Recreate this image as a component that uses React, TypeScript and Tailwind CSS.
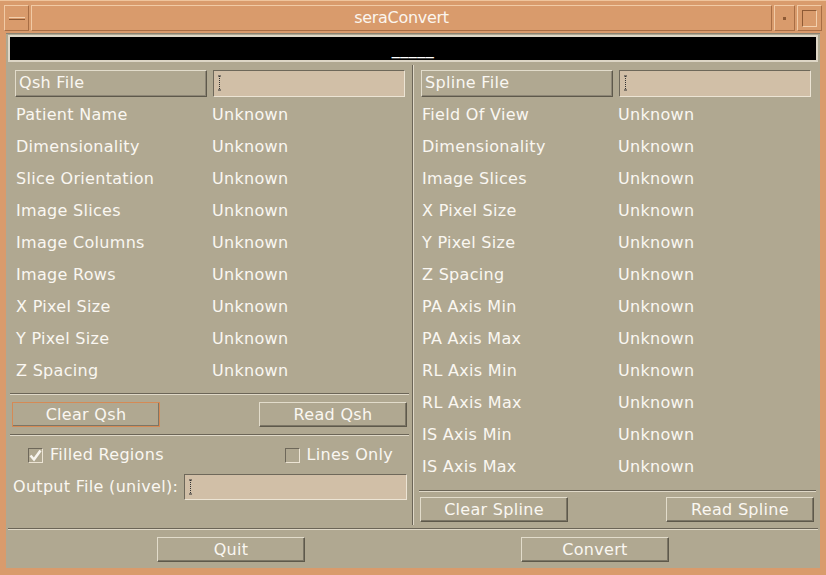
import React from "react";

const raised = "border border-t-[#e2dccb] border-l-[#e2dccb] border-b-[#5e594b] border-r-[#5e594b]";
const sunken = "border border-t-[#6e685a] border-l-[#6e685a] border-b-[#ece4d4] border-r-[#ece4d4]";

function Cursor() {
  return (
    <svg width="5" height="16" viewBox="0 0 5 16" className="ml-[3px]">
      <line x1="1" y1="1" x2="4" y2="1" stroke="#333" strokeWidth="1" />
      <line x1="2.5" y1="1" x2="2.5" y2="15" stroke="#333" strokeWidth="1" strokeDasharray="1 1" />
      <line x1="1" y1="15" x2="4" y2="15" stroke="#333" strokeWidth="1" />
    </svg>
  );
}

function FileRow({ label }: { label: string }) {
  return (
    <div className="h-[32px] flex items-center gap-[6px]">
      <div className={`w-[192px] h-[27px] ${raised} flex items-center pl-[3px] shadow-[inset_-1px_-1px_0_#8d8676]`}>{label}</div>
      <div className={`w-[192px] h-[27px] ${sunken} bg-[#d1bfa7] flex items-center`}>
        <Cursor />
      </div>
    </div>
  );
}

function InfoRow({ label }: { label: string }) {
  return (
    <div className="h-[32px] flex items-center">
      <div className="w-[197px] pl-[1px]">{label}</div>
      <div>Unknown</div>
    </div>
  );
}

function Btn({ label, focus, w = "w-[148px]" }: { label: string; focus?: boolean; w?: string }) {
  return (
    <div
      className={`${w} h-[25px] flex items-center justify-center ${
        focus ? "border border-[#d58a55]" : raised
      } shadow-[inset_-1px_-1px_0_#7c7666]`}
    >
      {label}
    </div>
  );
}

function Check({ checked }: { checked?: boolean }) {
  return (
    <div className={`w-[15px] h-[15px] ${sunken} flex items-center justify-center`}>
      {checked && (
        <svg width="13" height="13" viewBox="0 0 13 13">
          <path d="M1.5 6.5 L5 10.5 L11.5 1.5" fill="none" stroke="#f7f4ee" strokeWidth="2.6" />
        </svg>
      )}
    </div>
  );
}

function HLine({ className = "" }: { className?: string }) {
  return <div className={`h-[2px] border-t border-t-[#6b6557] border-b border-b-[#e0d9c8] ${className}`} />;
}

export default function App() {
  const left = ["Patient Name", "Dimensionality", "Slice Orientation", "Image Slices", "Image Columns", "Image Rows", "X Pixel Size", "Y Pixel Size", "Z Spacing"];
  const right = ["Field Of View", "Dimensionality", "Image Slices", "X Pixel Size", "Y Pixel Size", "Z Spacing", "PA Axis Min", "PA Axis Max", "RL Axis Min", "RL Axis Max", "IS Axis Min", "IS Axis Max"];

  return (
    <div className="w-[826px] h-[575px] bg-[#d99b6c] flex flex-col overflow-hidden text-[16px] tracking-[0.3px] text-[#faf7f1]" style={{ fontFamily: '"DejaVu Sans", Verdana, sans-serif' }}>
      {/* title bar */}
      <div className="h-[33px] flex items-stretch border-t border-t-[#efc49c] px-[4px] pt-[4px] pb-[2px] gap-[2px]">
        <div className="w-[25px] border border-t-[#f1caa5] border-l-[#f1caa5] border-b-[#a86e45] border-r-[#a86e45] flex items-center justify-center">
          <div className="w-[16px] h-[3px] border-t border-t-[#f3d0ae] border-b border-b-[#8e5a35]" />
        </div>
        <div className="flex-1 border border-t-[#f1caa5] border-l-[#f1caa5] border-b-[#a86e45] border-r-[#a86e45] flex items-center justify-center text-[#fbf5ee] text-[16px] tracking-[-0.3px]">
          seraConvert
        </div>
        <div className="w-[21px] border border-t-[#f1caa5] border-l-[#f1caa5] border-b-[#a86e45] border-r-[#a86e45] flex items-center justify-center">
          <div className="w-[3px] h-[3px] bg-[#8e5a35]" />
        </div>
        <div className="w-[25px] border border-t-[#f1caa5] border-l-[#f1caa5] border-b-[#a86e45] border-r-[#a86e45] flex items-center justify-center">
          <div className="w-[15px] h-[17px] border border-t-[#8e5a35] border-l-[#8e5a35] border-b-[#f3d0ae] border-r-[#f3d0ae]" />
        </div>
      </div>

      {/* body */}
      <div className="flex-1 mx-[6px] mb-[7px] bg-[#b0a891] border-t border-t-[#8a8373] flex flex-col px-[2px] pt-[1px]">
        <div className="h-[27px] bg-black border-2 border-[#ddd6c6] flex items-center justify-center text-white text-[16px] tracking-[0.5px]">
          _____
        </div>

        <div className="flex mt-[4px]">
          {/* left column */}
          <div className="w-[401px] flex flex-col pt-[1px]">
            <div className="pl-[7px]">
              <FileRow label="Qsh File" />
              {left.map((l) => (
                <InfoRow key={l} label={l} />
              ))}
            </div>
            <HLine className="mt-[6px] ml-[2px]" />
            <div className="flex justify-between pl-[4px] pr-[2px] mt-[7px]">
              <Btn label="Clear Qsh" focus />
              <Btn label="Read Qsh" />
            </div>
            <HLine className="mt-[7px] ml-[2px]" />
            <div className="h-[34px] mt-[2px] flex items-center justify-between pl-[20px] pr-[14px]">
              <div className="flex items-center gap-[7px]">
                <Check checked />
                <span>Filled Regions</span>
              </div>
              <div className="flex items-center gap-[7px] mr-[2px]">
                <Check />
                <span>Lines Only</span>
              </div>
            </div>
            <div className="h-[30px] flex items-center pl-[5px] pr-[2px]">
              <span className="w-[171px]">Output File (univel):</span>
              <div className={`flex-1 h-[26px] ${sunken} bg-[#d1bfa7] flex items-center`}>
                <Cursor />
              </div>
            </div>
          </div>

          {/* vertical separator */}
          <div className="w-[2px] ml-[3px] mr-[1px] mt-[-1px] h-[460px] border-l border-l-[#6b6557] border-r border-r-[#e0d9c8]" />

          {/* right column */}
          <div className="flex-1 flex flex-col pt-[1px]">
            <div className="pl-[6px]">
              <FileRow label="Spline File" />
              {right.map((l) => (
                <InfoRow key={l} label={l} />
              ))}
            </div>
            <HLine className="mt-[7px] ml-[4px] mr-[2px]" />
            <div className="flex justify-between pl-[5px] pr-[4px] mt-[5px]">
              <Btn label="Clear Spline" />
              <Btn label="Read Spline" />
            </div>
          </div>
        </div>

        <HLine className="mt-[3px]" />
        <div className="flex mt-[7px]">
          <div className="ml-[149px]">
            <Btn label="Quit" />
          </div>
          <div className="ml-[216px]">
            <Btn label="Convert" />
          </div>
        </div>
      </div>
    </div>
  );
}
